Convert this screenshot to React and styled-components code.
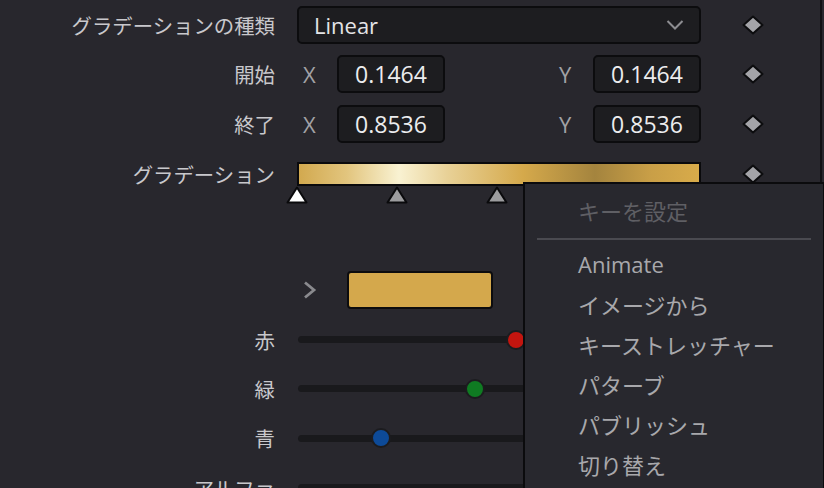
import React from "react";
import styled, { createGlobalStyle } from "styled-components";

const GlobalStyle = createGlobalStyle`
  html, body {
    margin: 0;
    padding: 0;
    background: #28272d;
    overflow: hidden;
  }
  body {
    font-family: "Open Sans", "Noto Sans CJK JP", sans-serif;
  }
`;

const Page = styled.div`
  position: relative;
  width: 824px;
  height: 488px;
  overflow: hidden;
  background: #28272d;
`;

const Panel = styled.div`
  width: 820px;
  height: 100%;
  border-right: 2px solid #111114;
  display: flex;
  flex-direction: column;
`;

const Row = styled.div`
  display: grid;
  grid-template-columns: 275px 404px 60px;
  column-gap: 22px;
  align-items: center;
  height: ${(p) => p.$h || 50}px;
  margin-top: ${(p) => p.$mt || 0}px;
  flex-shrink: 0;
`;

const Label = styled.div`
  text-align: right;
  font-size: 20.4px;
  color: #c8c8cc;
  white-space: nowrap;
`;

const Field = styled.div`
  display: flex;
  align-items: center;
  position: relative;
`;

const Dropdown = styled.div`
  box-sizing: border-box;
  width: 404px;
  height: 38px;
  display: flex;
  align-items: center;
  justify-content: space-between;
  padding: 0 15px 0 15px;
  background: #1d1d20;
  border: 2px solid #0c0c0e;
  border-radius: 5px;
  font-size: 22px;
  color: #e4e4e6;
`;

const Axis = styled.span`
  width: 40px;
  padding-left: 6px;
  box-sizing: border-box;
  font-size: 22px;
  color: #a2a2a6;
`;

const Spacer = styled.div`
  flex: 1;
`;

const NumberBox = styled.div`
  box-sizing: border-box;
  width: 108px;
  height: 38px;
  display: flex;
  align-items: center;
  justify-content: center;
  background: #1d1d20;
  border: 2px solid #0c0c0e;
  border-radius: 5px;
  font-size: 23px;
  color: #ececee;
`;

const KeyCell = styled.div`
  display: flex;
  justify-content: center;
  align-items: center;
  svg {
    display: block;
  }
`;

const GradientBar = styled.div`
  box-sizing: border-box;
  width: 404px;
  height: 24px;
  border: 2px solid #0a0a0c;
  background: linear-gradient(
    90deg,
    #d2a94f 0%,
    #e2c57e 12%,
    #f9f2d2 25%,
    #e8d197 37%,
    #d5a94b 56%,
    #a4843e 74%,
    #c99f47 88%,
    #d8ab4a 100%
  );
`;

const Stop = styled.div`
  position: absolute;
  top: 24px;
  width: 0;
  height: 0;
  transform: translateX(-11px);
  svg {
    display: block;
  }
`;

const SwatchField = styled.div`
  display: flex;
  align-items: center;
`;

const ChevronCell = styled.div`
  width: 50px;
  padding-left: 5px;
  box-sizing: border-box;
  display: flex;
  align-items: center;
  svg {
    display: block;
  }
`;

const Swatch = styled.div`
  box-sizing: border-box;
  width: 146px;
  height: 38px;
  background: #d4a84c;
  border: 2px solid #0c0c0e;
  border-radius: 4px;
`;

const Track = styled.div`
  position: relative;
  width: 404px;
  height: 7px;
  border-radius: 4px;
  background: #19191c;
  margin-left: 1px;
`;

const Knob = styled.div`
  position: absolute;
  top: 50%;
  width: 16px;
  height: 16px;
  border-radius: 50%;
  background: ${(p) => p.$color};
  border: 2px solid #1c1c1f;
  transform: translate(-50%, -50%);
`;

const Menu = styled.div`
  position: absolute;
  left: 523px;
  top: 182px;
  width: 302px;
  height: 330px;
  box-sizing: border-box;
  background: #28282e;
  border: 2px solid #0b0b0d;
  padding-top: 6px;
`;

const MenuItem = styled.div`
  height: 40px;
  display: flex;
  align-items: center;
  padding-left: 53px;
  font-size: 22px;
  color: ${(p) => (p.$disabled ? "#5f5f64" : "#a8a8ac")};
  white-space: nowrap;
`;

const Separator = styled.div`
  height: 2px;
  margin: 8px 12px 4px;
  background: #4a4a50;
`;

const Chevron = ({ dir }) =>
  dir === "down" ? (
    <svg width="18" height="12" viewBox="0 0 18 12">
      <path d="M1.5 2 L9 9.5 L16.5 2" fill="none" stroke="#8d8d91" strokeWidth="2" />
    </svg>
  ) : (
    <svg width="16" height="20" viewBox="0 0 16 20">
      <path d="M3 2.5 L12 10 L3 17.5" fill="none" stroke="#8a8a8e" strokeWidth="2.8" />
    </svg>
  );

const StopMark = ({ active }) => (
  <svg width="22" height="18" viewBox="0 0 22 18">
    <path
      d="M11 1.5 L20.5 16.5 L1.5 16.5 Z"
      fill={active ? "#ffffff" : "#9c9c9e"}
      stroke="#0a0a0c"
      strokeWidth="2"
      strokeLinejoin="round"
    />
  </svg>
);

const DiamondIcon = () => (
  <svg width="22" height="20" viewBox="0 0 22 20">
    <path
      d="M11 1.5 L20.5 10 L11 18.5 L1.5 10 Z"
      fill="#a4a4a8"
      stroke="#0c0c0e"
      strokeWidth="2"
      strokeLinejoin="round"
    />
  </svg>
);

const stops = [
  { at: 0, active: true },
  { at: 100, active: false },
  { at: 200, active: false },
];

const sliders = [
  { label: "赤", color: "#c3150f", pos: 218 },
  { label: "緑", color: "#0f7b22", pos: 177 },
  { label: "青", color: "#0d4a98", pos: 83 },
  { label: "アルファ", color: "#9a9a9e", pos: 400 },
];

const menuItems = [
  "Animate",
  "イメージから",
  "キーストレッチャー",
  "パターブ",
  "パブリッシュ",
  "切り替え",
];

const Key = () => (
  <KeyCell>
    <DiamondIcon />
  </KeyCell>
);

export default function App() {
  return (
    <Page>
      <GlobalStyle />
      <Panel>
        <Row $h={49}>
          <Label>グラデーションの種類</Label>
          <Dropdown>
            <span>Linear</span>
            <Chevron dir="down" />
          </Dropdown>
          <Key />
        </Row>
        <Row>
          <Label>開始</Label>
          <Field>
            <Axis>X</Axis>
            <NumberBox>0.1464</NumberBox>
            <Spacer />
            <Axis>Y</Axis>
            <NumberBox>0.1464</NumberBox>
          </Field>
          <Key />
        </Row>
        <Row>
          <Label>終了</Label>
          <Field>
            <Axis>X</Axis>
            <NumberBox>0.8536</NumberBox>
            <Spacer />
            <Axis>Y</Axis>
            <NumberBox>0.8536</NumberBox>
          </Field>
          <Key />
        </Row>
        <Row>
          <Label>グラデーション</Label>
          <Field>
            <GradientBar />
            {stops.map((s) => (
              <Stop key={s.at} style={{ left: s.at }}>
                <StopMark active={s.active} />
              </Stop>
            ))}
          </Field>
          <Key />
        </Row>
        <Row $h={50} $mt={66}>
          <span />
          <SwatchField>
            <ChevronCell>
              <Chevron dir="right" />
            </ChevronCell>
            <Swatch />
          </SwatchField>
        </Row>
        {sliders.map((s) => (
          <Row key={s.label} $h={49.33}>
            <Label>{s.label}</Label>
            <Track>
              <Knob $color={s.color} style={{ left: s.pos }} />
            </Track>
          </Row>
        ))}
      </Panel>
      <Menu>
        <MenuItem $disabled>キーを設定</MenuItem>
        <Separator />
        {menuItems.map((m) => (
          <MenuItem key={m}>{m}</MenuItem>
        ))}
      </Menu>
    </Page>
  );
}
